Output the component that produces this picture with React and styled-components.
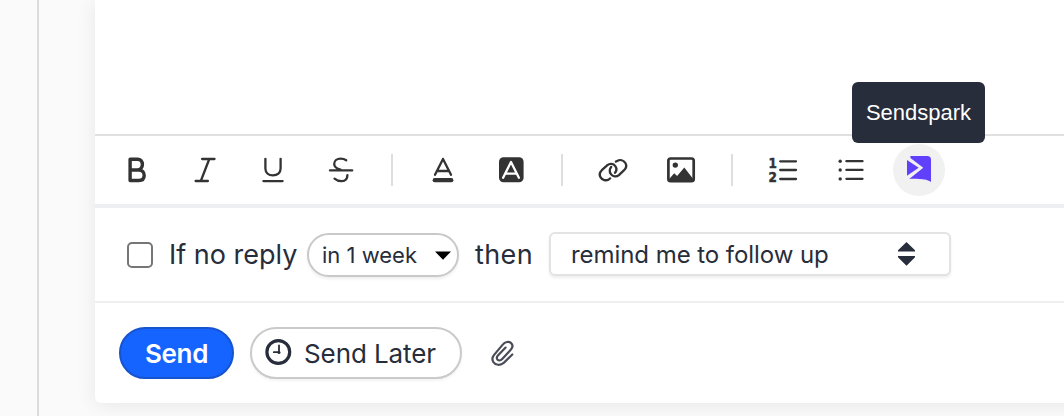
import React from "react";
import styled, { createGlobalStyle } from "styled-components";

const Global = createGlobalStyle`
  *, *::before, *::after { box-sizing: border-box; }
  body { margin: 0; background: #fafafa; overflow: hidden; }
`;

const Page = styled.div`
  display: flex;
  width: 100%;
  height: 416px;
  overflow: hidden;
  background: #fafafa;
  color: #272d3a;
  font-family: Inter, "Liberation Sans", sans-serif;
`;

const Rail = styled.div`
  flex: none;
  width: 39px;
  border-right: 2px solid #dcdcdc;
`;

const Composer = styled.main`
  flex: 1;
  min-width: 0;
  height: 403px;
  margin: 0 -24px 0 56px;
  display: flex;
  flex-direction: column;
  background: #fff;
  border-radius: 0 0 0 6px;
  box-shadow: 0 2px 20px rgba(0, 0, 0, 0.08);
`;

const MessageBody = styled.div`
  height: 134px;
`;

const Toolbar = styled.div`
  display: flex;
  align-items: center;
  height: 74px;
  padding-left: 8px;
  border-top: 2px solid #e0e0e0;
  border-bottom: 4px solid #eeeff3;
`;

const ToolButton = styled.button`
  position: relative;
  display: flex;
  align-items: center;
  justify-content: center;
  flex: none;
  width: 68px;
  height: 52px;
  padding: 0;
  border: 0;
  background: none;
  color: #333;
`;

const Glyph = styled.svg`
  display: block;
  flex: none;
  width: ${(p) => p.$size || 36}px;
  height: ${(p) => p.$size || 36}px;
  overflow: visible;
  fill: none;
  stroke: currentColor;
  stroke-width: ${(p) => p.$weight || 2.3};
  stroke-linecap: round;
  stroke-linejoin: round;
`;

const Swatch = styled.path`
  stroke-width: 4.2;
`;

const ClockHands = styled.path`
  stroke-width: 1.8;
`;

const ListNumber = styled.text`
  fill: currentColor;
  stroke: currentColor;
  stroke-width: 0.5;
  font: bold 13.5px "DejaVu Sans", sans-serif;
`;

const Divider = styled.span`
  flex: none;
  width: 2px;
  height: 32px;
  margin: 0 16px;
  background: #dedede;
`;

const HoverDisc = styled.span`
  display: flex;
  align-items: center;
  justify-content: center;
  width: 52px;
  height: 52px;
  border-radius: 50%;
  background: #f1f1f1;
`;

const Tooltip = styled.span`
  position: absolute;
  left: -33px;
  bottom: 53px;
  width: 133px;
  height: 61px;
  display: flex;
  align-items: center;
  justify-content: center;
  border-radius: 6px;
  background: #272d3a;
  color: #fff;
  font: 22px "Liberation Sans", Arial, sans-serif;
`;

const ReminderRow = styled.div`
  display: flex;
  align-items: center;
  height: 95px;
  padding: 1px 0 0 32px;
  border-bottom: 2px solid #efeff1;
`;

const Checkbox = styled.span`
  flex: none;
  width: 26px;
  height: 26px;
  border: 2px solid #767676;
  border-radius: 5px;
`;

const Label = styled.span`
  flex: none;
  width: ${(p) => p.$width}px;
  margin-left: ${(p) => p.$gap}px;
  font-size: 27px;
  line-height: 36px;
  letter-spacing: ${(p) => p.$track || 0}px;
  white-space: nowrap;
`;

const DelaySelect = styled.button`
  display: flex;
  align-items: center;
  justify-content: space-between;
  flex: none;
  width: 152px;
  height: 44px;
  padding: 0 6px 0 13px;
  border: 2px solid #c9c9c9;
  border-radius: 22px;
  background: #fff;
  box-shadow: 0 2px 3px rgba(0, 0, 0, 0.07);
  color: inherit;
  font: 22px/26px Inter, sans-serif;
  white-space: nowrap;
`;

const ActionSelect = styled(DelaySelect)`
  width: 402px;
  padding: 0 34px 0 20px;
  margin: 0 0 2px 16px;
  border-color: #e3e3e3;
  border-radius: 6px;
  font-size: 24px;
  line-height: 28px;
  letter-spacing: -0.06px;
`;

const Arrow = styled.svg`
  display: block;
  flex: none;
  fill: currentColor;
`;

const SendRow = styled.div`
  display: flex;
  align-items: center;
  height: 100px;
  padding-left: 24px;
`;

const SendButton = styled.button`
  flex: none;
  width: 115px;
  height: 52px;
  padding: 2px 0 0;
  border: 2px solid #1553cf;
  border-radius: 26px;
  background: #1664ff;
  color: #fff;
  font: 600 26px/30px Inter, sans-serif;
  letter-spacing: -0.3px;
`;

const LaterButton = styled.button`
  display: flex;
  align-items: center;
  flex: none;
  width: 212px;
  height: 52px;
  margin-left: 16px;
  padding: 0 0 0 12px;
  gap: 12px;
  border: 2px solid #cacaca;
  border-radius: 26px;
  background: #fff;
  box-shadow: 0 2px 3px rgba(0, 0, 0, 0.05);
  color: inherit;
  font: 26px/30px Inter, sans-serif;
  letter-spacing: -0.1px;
  white-space: nowrap;
`;

const ButtonText = styled.span`
  padding-top: 2px;
`;

const AttachButton = styled.button`
  display: flex;
  margin-left: 28px;
  padding: 0;
  border: 0;
  background: none;
  color: #4a4d57;
`;

const Tool = ({ label, weight, children }) => (
  <ToolButton aria-label={label}>
    <Glyph viewBox="-18 -18 36 36" $weight={weight}>{children}</Glyph>
  </ToolButton>
);

export default function App() {
  return (
    <>
      <Global />
      <Page>
        <Rail />
        <Composer>
          <MessageBody />
          <Toolbar>
            <Tool label="Bold" weight={3.4}>
              <path d="M-6.9-10.8V10.5H1.8C5.6 10.5 7.2 8.2 7.2 5.2S5 0 1.8 0H-6.9M-6.9-10.8H.5C3.6-10.8 5.4-8.5 5.4-5.5S3.4 0 .5 0" />
            </Tool>
            <Tool label="Italic">
              <path d="M-2.9-11H9.5M-9.4 11H2.9M4.3-11L-4.2 11" />
            </Tool>
            <Tool label="Underline">
              <path d="M-7.6-11.2V-1.5C-7.6 3-4.3 5.4 0 5.4S7.6 3 7.6-1.5V-11.2M-9.6 11.1H9.6" />
            </Tool>
            <Tool label="Strikethrough">
              <path d="M5.2-9.7C3.6-10.8 1.5-11.3-.4-11.3C-4.2-11.3-6.8-9.3-6.8-6C-6.8-3.2-4.7-1.5-.5-.3M-11 .4H11.2M-6.5 8.7C-4.7 10.3-2 11.2.8 11.2C4.3 11.2 6.4 9 6.4 5.1" />
            </Tool>
            <Divider />
            <Tool label="Text color">
              <path d="M-8 4.8L0-11.1L8 4.8M-5.6 1H5.6" />
              <Swatch d="M-8.3 10.2H8.3" />
            </Tool>
            <Tool label="Highlight color">
              <rect x="-12" y="-12.8" width="24.6" height="25" rx="4.5" fill="currentColor" stroke="none" />
              <path stroke="#fff" d="M-7.9 7.7L0-8L7.9 7.7M-5.7 3.7H5.7" />
            </Tool>
            <Divider />
            <Tool label="Link" weight={2.3}>
              <path d="M-2.8 8.4L-4.2 9.4C-7 11-10.8 10.2-12.4 7.4C-13.8 5-13.2 2.2-11.2.2L-5.6-4.9C-3.2-6.9.6-6.4 2.3-3.9C3.8-1.7 3.5 1 2 2.8" />
              <path d="M2.9-8.4L4.2-9.1C7-10.6 10.6-9.8 12.4-7C13.8-4.6 13.1-1.8 11.1.2L5.9 5.1C3.4 7.2-.3 6.7-2.1 4.1C-3.6 1.9-3.4-1.1-1.8-3" />
            </Tool>
            <Tool label="Image" weight={2.7}>
              <rect x="-12.6" y="-11.5" width="25.3" height="22.6" rx="2.2" />
              <circle cx="-5.7" cy="-4.9" r="2.7" fill="currentColor" stroke="none" />
              <path d="M-11.8 9L-6.8 3.3L-3.9 6.1L3.3-2.6L12 8.7V11H-11.8Z" fill="currentColor" stroke="none" />
            </Tool>
            <Divider />
            <Tool label="Numbered list">
              <path d="M-2.8-8.7H13M-2.8 0H13M-2.8 9H13" />
              <ListNumber x="-14.4" y="-2.2" textLength="8.4" lengthAdjust="spacingAndGlyphs">1</ListNumber>
              <ListNumber x="-14.4" y="11.9" textLength="8.4" lengthAdjust="spacingAndGlyphs">2</ListNumber>
            </Tool>
            <Tool label="Bulleted list">
              <path d="M-4.6-8.8H11.5M-4.6-.1H11.5M-4.6 8.8H11.5" />
              <g fill="currentColor" stroke="none">
                <circle cx="-10.8" cy="-8.7" r="1.7" />
                <circle cx="-10.8" cy="0" r="1.7" />
                <circle cx="-10.8" cy="8.9" r="1.7" />
              </g>
            </Tool>
            <ToolButton aria-label="Sendspark">
              <HoverDisc>
                <Glyph viewBox="-18 -18 36 36">
                  <g fill="#6140fb" stroke="none">
                    <path d="M-8.6-14H8.2C10.8-14 12-12.8 12-10.3V12C7.5 9.4 3.5 8.7-9.8 8.9L4.3-2.3L-8.6-12Z" />
                    <path d="M-12-10L-.3-2.3L-12 5.8Z" />
                  </g>
                </Glyph>
              </HoverDisc>
              <Tooltip role="tooltip">Sendspark</Tooltip>
            </ToolButton>
          </Toolbar>
          <ReminderRow>
            <Checkbox role="checkbox" aria-checked="false" />
            <Label $width={138} $gap={16}>If no reply</Label>
            <DelaySelect>
              in 1 week
              <Arrow width="16" height="9" viewBox="0 0 16 9" color="#000"><path d="M0 .5H16L8 8.8Z" /></Arrow>
            </DelaySelect>
            <Label $width={58} $gap={16} $track={0.4}>then</Label>
            <ActionSelect>
              <ButtonText>remind me to follow up</ButtonText>
              <Arrow width="17" height="24" viewBox="0 0 17 24"><path d="M8.5 0L17 8.2V9.5H0V8.2ZM0 14H17V15.3L8.5 23.8L0 15.3Z" /></Arrow>
            </ActionSelect>
          </ReminderRow>
          <SendRow>
            <SendButton>Send</SendButton>
            <LaterButton>
              <Glyph viewBox="-14 -14 28 28" $weight={3.2} $size={28}>
                <circle cx=".3" cy="-1" r="11.4" />
                <ClockHands d="M1-7.5V-.8H-4.2" />
                <circle cx="1" cy="-.6" r="1.5" fill="currentColor" stroke="none" />
              </Glyph>
              <ButtonText>Send Later</ButtonText>
            </LaterButton>
            <AttachButton aria-label="Attach file">
              <svg width="24" height="26" viewBox="490 340 24 26" fill="none" stroke="currentColor" strokeWidth="2.2" strokeLinecap="round">
                <path d="M512.3 354.5L504 362.6C500.4 365.9 495.3 365.3 493.3 362C491.9 359.6 492.1 357.3 494.1 354.9L502.5 344.9C505.3 341.5 508.9 341.2 510.9 342.9C513 344.8 512.9 347.3 510.9 349.6L502.2 359.1C500.4 361 498.5 360.8 497.4 359.5C496.5 358.2 496.7 356.9 497.9 355.6L505.6 347.6" />
              </svg>
            </AttachButton>
          </SendRow>
        </Composer>
      </Page>
    </>
  );
}
